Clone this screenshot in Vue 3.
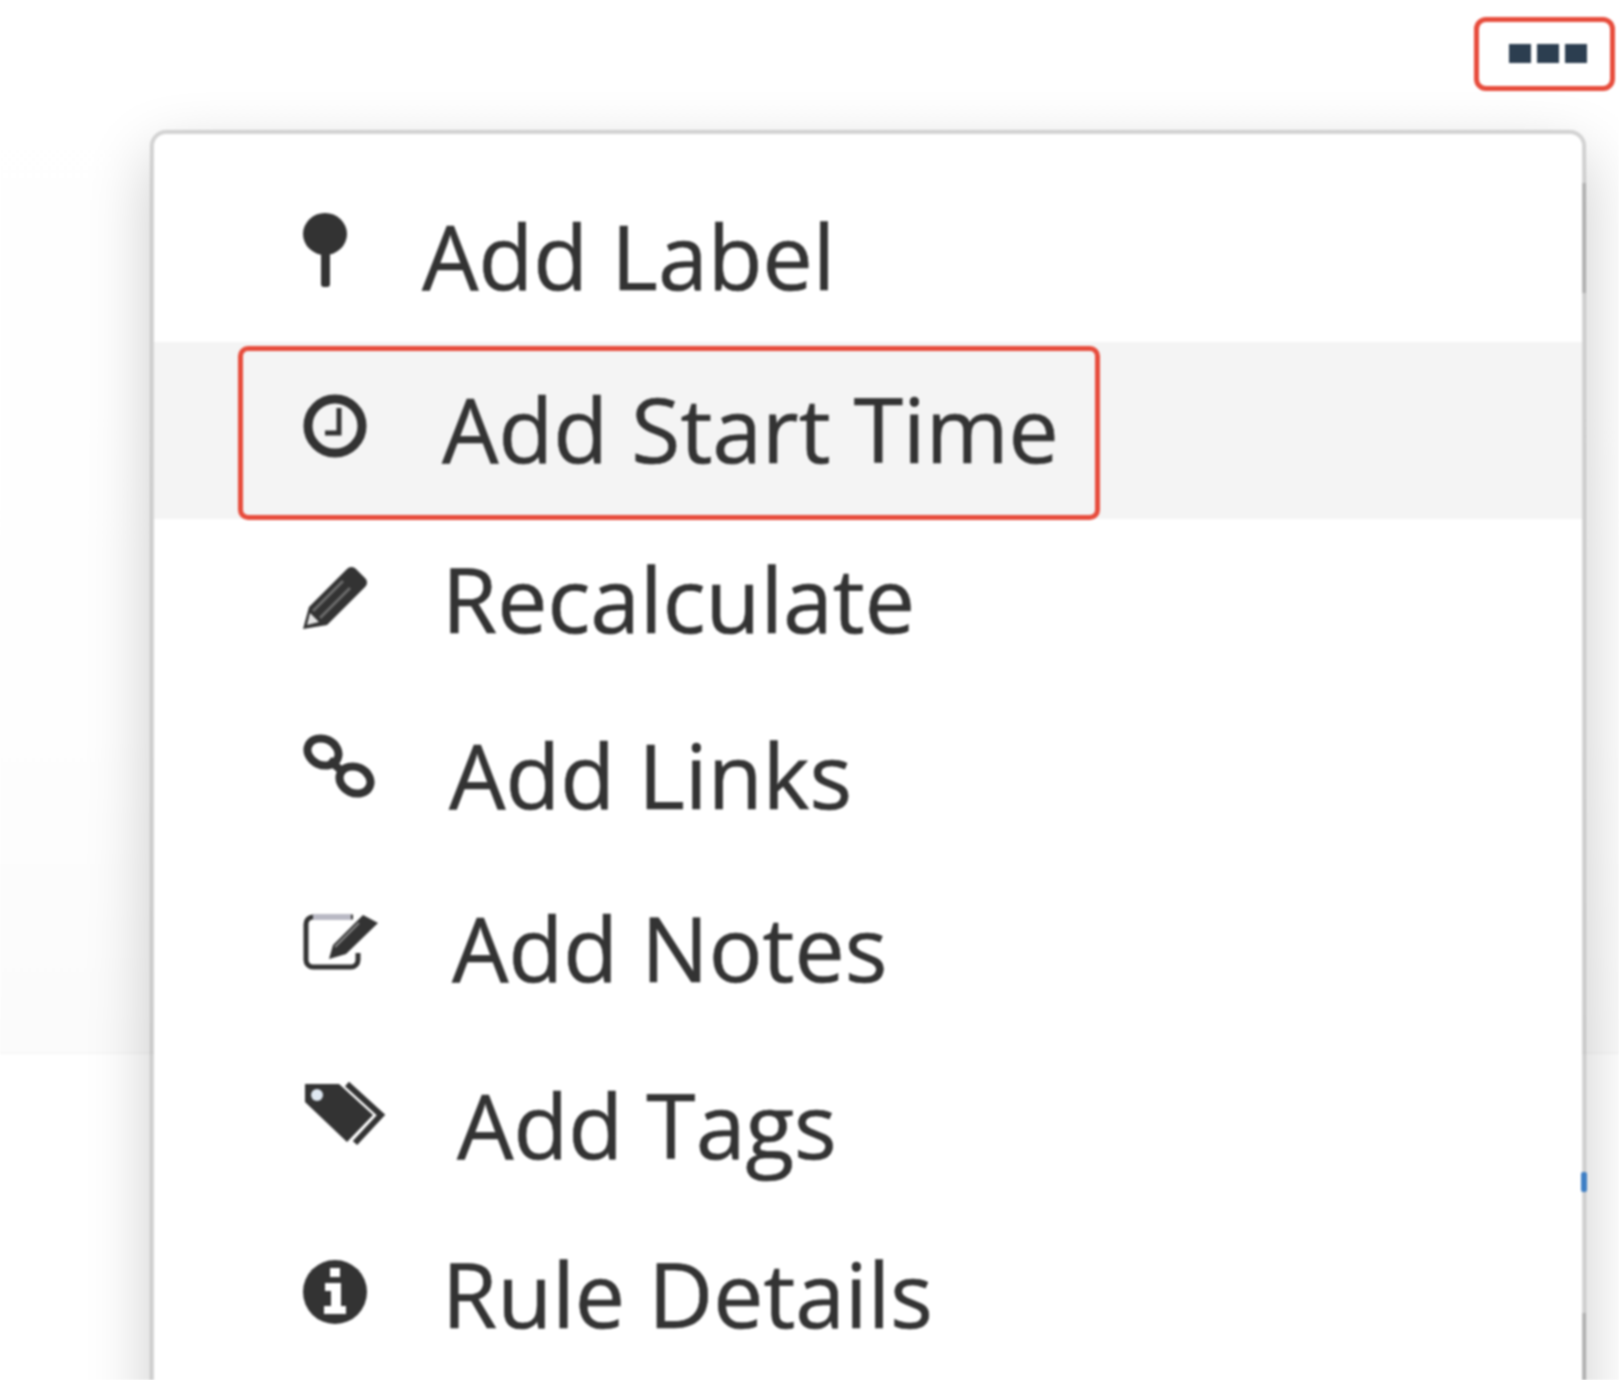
<template>
  <div class="page">
    <div class="top-band">
      <button class="more-btn" type="button">
        <span class="dot"></span>
        <span class="dot"></span>
        <span class="dot"></span>
      </button>
    </div>

    <div class="menu">
      <div
        v-for="item in items"
        :key="item.label"
        class="menu__row"
        :class="{ 'menu__row--active': item.active }"
        :style="rowStyle(item)"
      >
        <span class="menu__item">
          <svg class="menu__icon" :width="item.w" height="72" :viewBox="`0 0 ${item.w} 72`" v-html="item.svg"></svg>
          <span class="menu__label">{{ item.label }}</span>
        </span>
      </div>
      <div class="highlight-box"></div>
      <span class="edge-mark edge-mark--top"></span>
      <span class="edge-mark edge-mark--bottom"></span>
      <span class="blue-tick"></span>
    </div>
  </div>
</template>

<script setup>
const c = '#333'

const items = [
  {
    label: 'Add Label',
    w: 45,
    svg: `<g transform="translate(0 -3)"><ellipse cx="22" cy="21" rx="22" ry="21" fill="${c}"/><rect x="18" y="40" width="9" height="34" rx="3" fill="${c}"/></g>`
  },
  {
    label: 'Add Start Time',
    w: 65,
    active: true,
    svg: `<g transform="translate(0 1)"><circle cx="32" cy="36" r="27" fill="none" stroke="${c}" stroke-width="9"/><path d="M36 18v25H22" fill="none" stroke="${c}" stroke-width="5"/></g>`
  },
  {
    label: 'Recalculate',
    w: 65,
    nudge: -3,
    svg: `<g transform="translate(0 2)"><path d="M0 68l6-22L44 8a6 6 0 0 1 9 0l9 9a6 6 0 0 1 0 9L24 64z" fill="${c}"/><path d="M10 50l30-30M17 57l30-30" stroke="#6b6b6b" stroke-width="3"/><path d="M4 64l3-12 9 9z" fill="#e4e4e4"/></g>`
  },
  {
    label: 'Add Links',
    w: 72,
    svg: `<g fill="none" stroke="${c}" stroke-width="8" transform="translate(0 -1)"><ellipse cx="20" cy="18" rx="16" ry="13" transform="rotate(25 20 18)"/><ellipse cx="52" cy="46" rx="16" ry="13" transform="rotate(25 52 46)"/><path d="M26 26l14 12" stroke-width="8"/></g>`
  },
  {
    label: 'Add Notes',
    w: 75,
    svg: `<g transform="translate(0 1)"><path d="M50 8H10a7 7 0 0 0-7 7v36a7 7 0 0 0 7 7h38a7 7 0 0 0 7-7v-7" fill="none" stroke="${c}" stroke-width="5"/><path d="M10 8h38" stroke="#b9b9c4" stroke-width="6"/><path d="M26 50l4-14L60 6l15 8-32 31z" fill="${c}"/><path d="M32 38l24-24" stroke="#888" stroke-width="2"/></g>`
  },
  {
    label: 'Add Tags',
    w: 80,
    nudge: 4,
    svg: `<g transform="translate(0 -3)"><path d="M2 2h34l34 31-26 27L2 20z" fill="${c}"/><circle cx="14" cy="13" r="6" fill="#dfe8f2"/><path d="M44 2l34 31-26 28" fill="none" stroke="${c}" stroke-width="6"/></g>`
  },
  {
    label: 'Rule Details',
    w: 65,
    svg: `<g transform="translate(0 2)"><circle cx="32" cy="36" r="32" fill="${c}"/><path d="M27 12h10v9H27zM22 27h16v23h5v8H21v-8h7V35h-6z" fill="#fff"/></g>`
  }
]

function rowStyle(item) {
  if (!item.nudge) return null
  return item.nudge > 0
    ? { paddingTop: `${item.nudge * 2}px` }
    : { paddingBottom: `${-item.nudge * 2}px` }
}
</script>

<style>
html,
body {
  margin: 0;
  background: #fff;
}
</style>

<style scoped>
.page {
  position: relative;
  width: 1619px;
  height: 1380px;
  overflow: hidden;
  background: #fff;
  font-family: "Open Sans", "Noto Sans", sans-serif;
  filter: blur(1.3px);
}

.top-band {
  display: flex;
  justify-content: flex-end;
  align-items: flex-start;
  height: 1054px;
  padding: 17px 4px 0 0;
  box-sizing: border-box;
  background: linear-gradient(#fff, #fefefe 70%, #fbfbfb);
  border-bottom: 2px solid #f7f7f7;
}

.more-btn {
  display: flex;
  align-items: flex-start;
  gap: 6px;
  box-sizing: border-box;
  width: 141px;
  height: 74px;
  padding: 22px 0 0 30px;
  background: #fff;
  border: 5px solid #e74c3c;
  border-radius: 12px;
}

.dot {
  width: 22px;
  height: 19px;
  background: #2c3e50;
}

.menu {
  position: absolute;
  top: 130px;
  left: 150px;
  width: 1436px;
  height: 1400px;
  box-sizing: border-box;
  padding-top: 35px;
  background: #fff;
  border: 4px solid rgba(0, 0, 0, 0.17);
  border-radius: 16px;
  box-shadow: 0 24px 64px rgba(0, 0, 0, 0.2);
  background-clip: padding-box;
}

.menu__row {
  display: flex;
  align-items: center;
  box-sizing: border-box;
  height: 173px;
  padding-left: 149px;
  color: #333;
}

.menu__row--active {
  background: #f4f4f4;
  box-shadow: 0 4px 0 #f4f4f4;
}

.menu__item {
  display: flex;
  align-items: center;
  gap: 74px;
}

.menu__icon {
  flex: none;
  margin-top: -8px;
  overflow: visible;
}

.menu__label {
  font-size: 89.5px;
  line-height: 1;
  white-space: nowrap;
  -webkit-text-stroke: 0.6px #333;
}

.highlight-box {
  position: absolute;
  top: 212px;
  left: 84px;
  width: 862px;
  height: 174px;
  box-sizing: border-box;
  border: 5px solid #e74c3c;
  border-radius: 10px;
}

.edge-mark {
  position: absolute;
  right: -4px;
  width: 4px;
  background: rgba(0, 0, 0, 0.14);
}

.edge-mark--top {
  top: 49px;
  height: 110px;
}

.edge-mark--bottom {
  top: 1179px;
  height: 70px;
}

.blue-tick {
  position: absolute;
  top: 1038px;
  right: -5px;
  width: 6px;
  height: 20px;
  background: #3f7fc4;
  border-radius: 2px;
}
</style>
